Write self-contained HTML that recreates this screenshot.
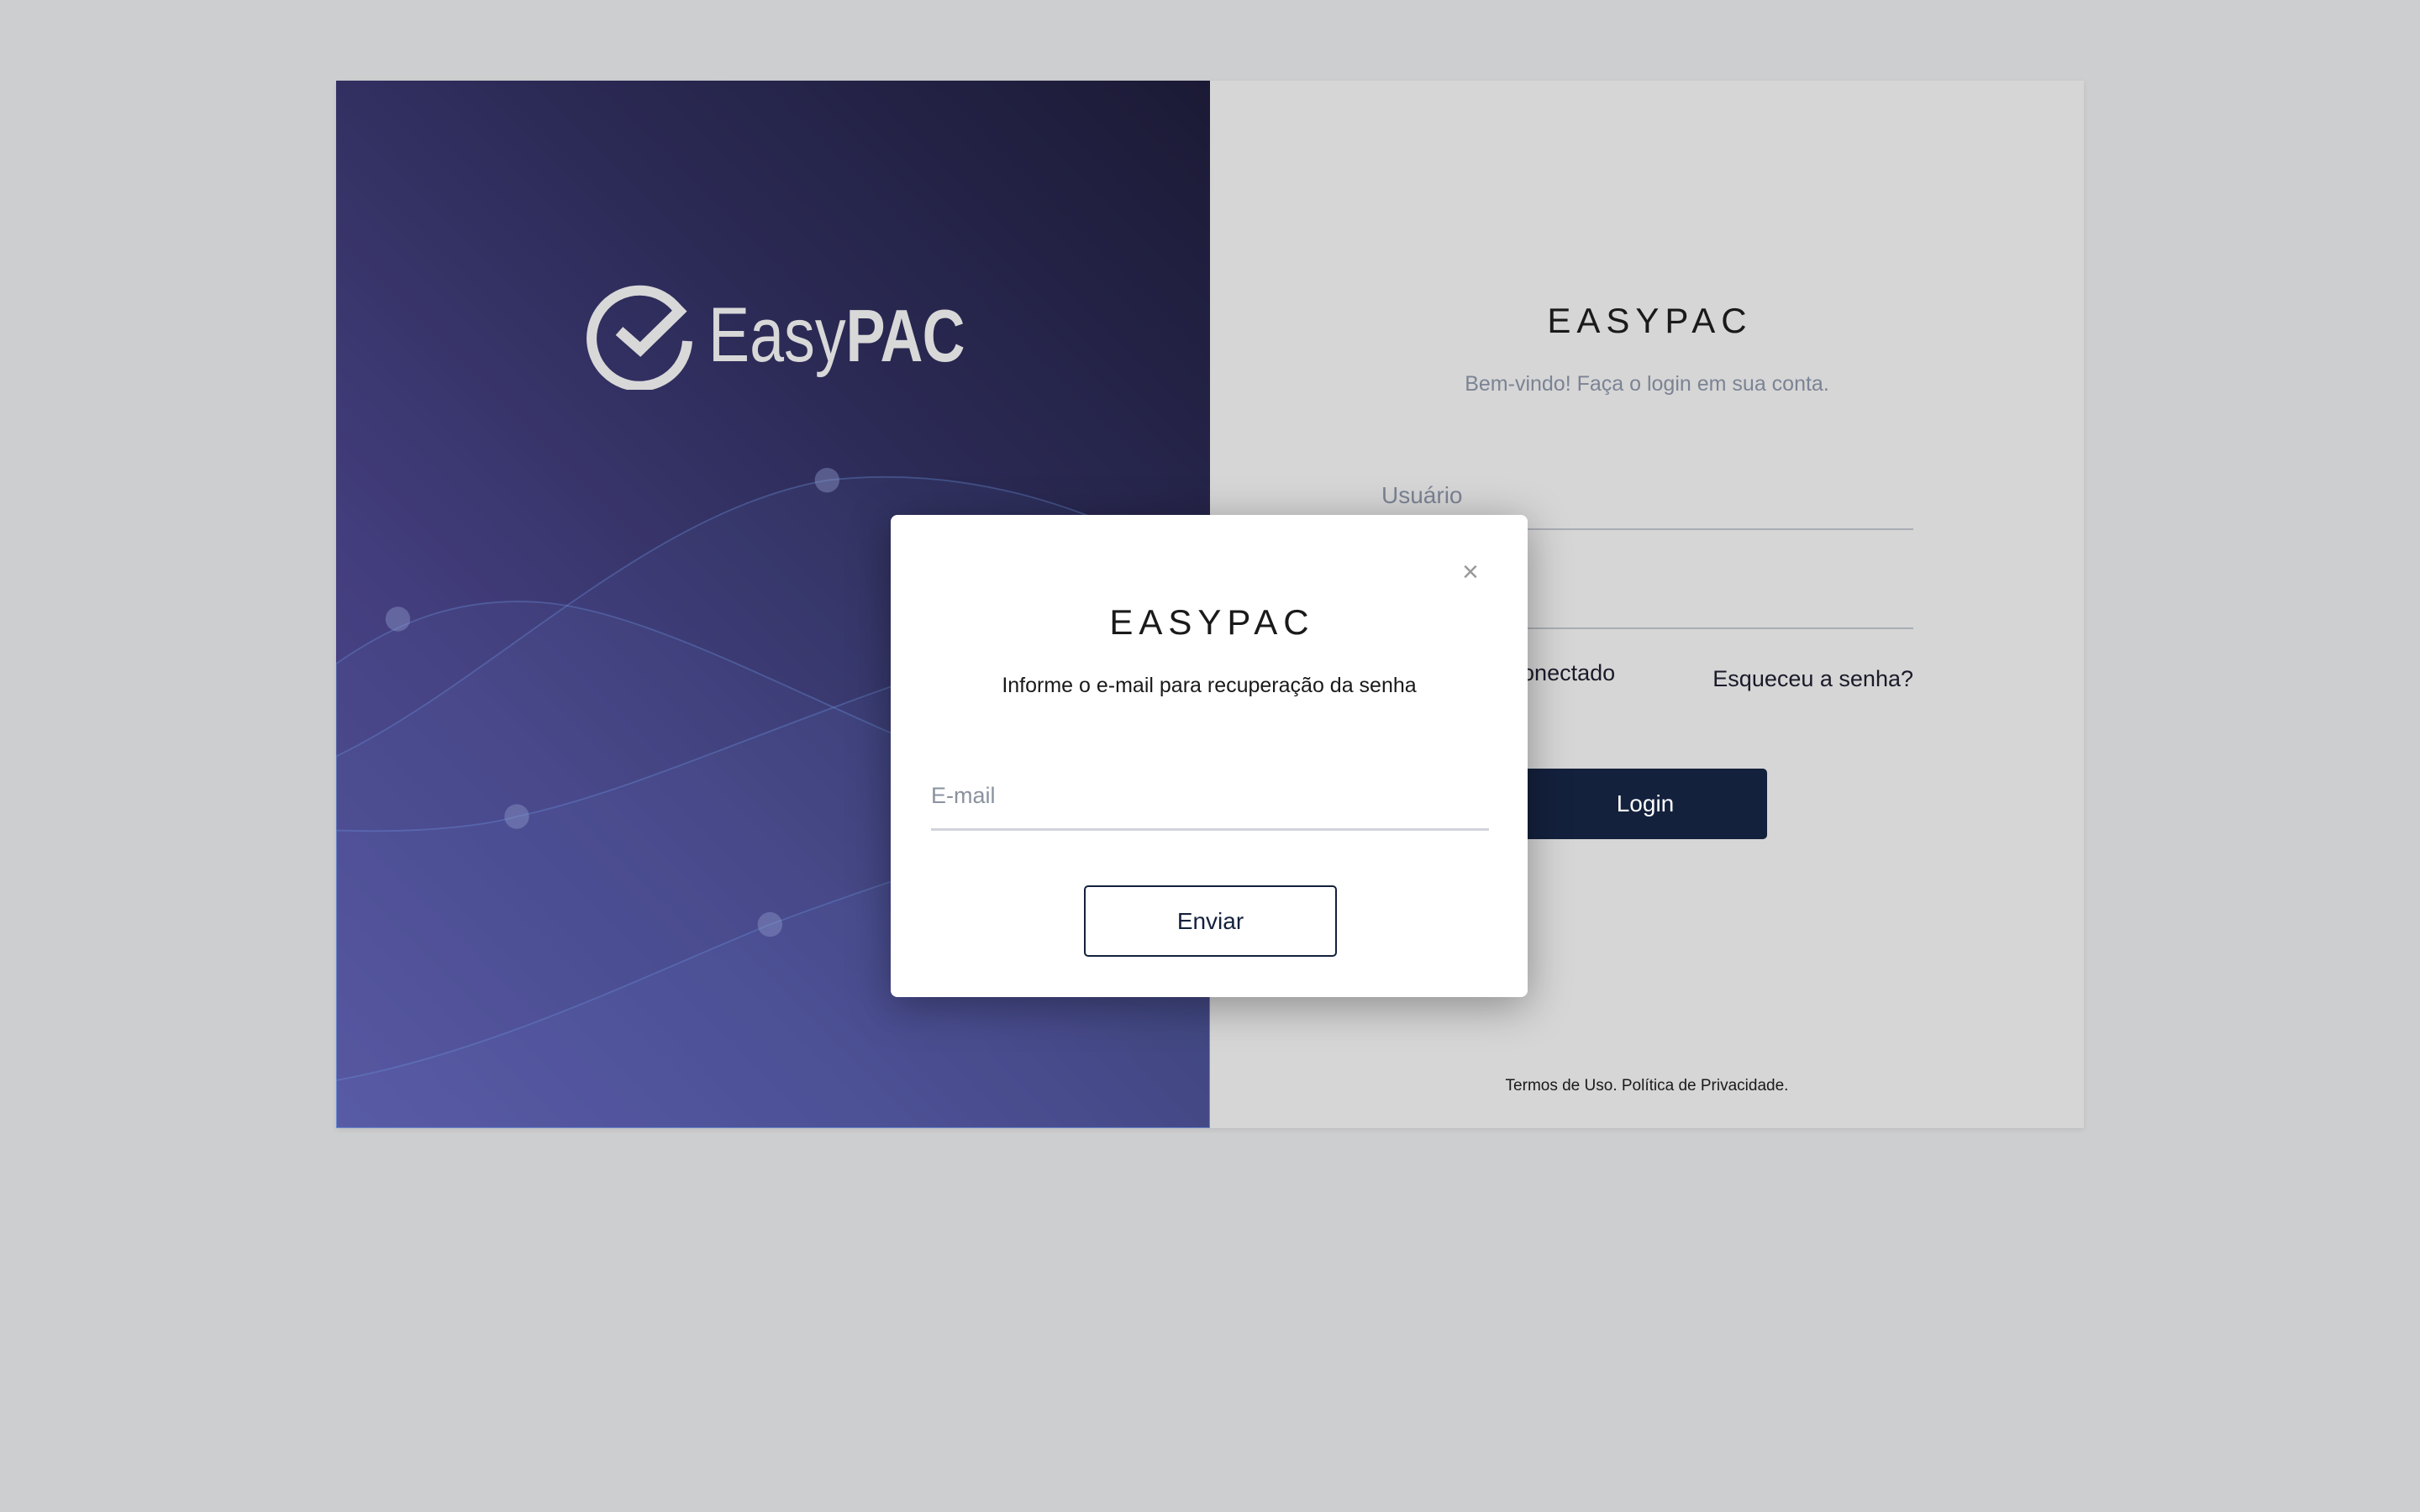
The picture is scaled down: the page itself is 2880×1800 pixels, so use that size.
<!DOCTYPE html>
<html><head><meta charset="utf-8"><style>
*{margin:0;padding:0;box-sizing:border-box}
body{width:2880px;height:1800px;background:#cdcecf;font-family:"Liberation Sans",sans-serif;position:relative;overflow:hidden}
.card{position:absolute;left:400px;top:96px;width:2080px;height:1247px;background:#d6d6d6;box-shadow:0 2px 6px rgba(0,0,0,0.08)}
.left{position:absolute;left:0;top:0;width:1040px;height:1247px;background:linear-gradient(225deg,#1b1a35 0%,#2b2a55 35%,#433e7e 70%,#514c93 100%);overflow:hidden}
.abs{position:absolute;white-space:nowrap}
.modal{position:absolute;left:1060px;top:613px;width:758px;height:574px;background:#fff;border-radius:8px;box-shadow:0 10px 50px rgba(0,0,0,0.35)}
</style></head><body>
<div class="card">
 <div class="left">
  <svg width="1040" height="1247" viewBox="0 0 566 679" preserveAspectRatio="none" style="position:absolute;left:0;top:0">
   <g stroke="rgba(110,150,220,0.35)" stroke-width="1" fill="rgba(120,150,230,0.06)">
    <path d="M0,378 C40,350 80,335 130,338 C200,342 300,400 400,440 C470,468 520,500 566,520 L566,679 L0,679Z"/>
    <path d="M0,438 C100,390 200,280 318,259 C400,250 480,270 566,320 L566,679 L0,679Z"/>
    <path d="M0,486 C60,488 100,482 117,477 C220,455 330,390 566,330 L566,679 L0,679Z"/>
    <path d="M0,648 C100,630 200,580 281,547 C380,510 480,480 566,460 L566,679 L0,679Z"/>
   </g>
   <g fill="rgba(140,150,200,0.45)">
    <circle cx="40" cy="349" r="8"/><circle cx="318" cy="259" r="8"/><circle cx="117" cy="477" r="8"/><circle cx="281" cy="547" r="8"/>
   </g>
  </svg>
  <svg width="140" height="140" viewBox="0 0 140 140" style="position:absolute;left:295px;top:228px">
   <path d="M112,45 A57,57 0 1 0 123,82" fill="none" stroke="#d8d8d8" stroke-width="12"/>
   <path d="M42,70 L67,92 L118,42" fill="none" stroke="#d8d8d8" stroke-width="13"/>
  </svg>
  <div class="abs" style="left:443px;top:257px;font-size:92px;color:#d8d8d8;line-height:1;transform:scaleX(0.8);transform-origin:0 0">Easy<b style="font-size:88px;letter-spacing:-1px">PAC</b></div>
 </div>
 <div class="abs" style="left:1040px;width:1040px;top:262px;text-align:center;font-size:42px;letter-spacing:7px;color:#1a1a1a;padding-left:7px">EASYPAC</div>
 <div class="abs" style="left:1040px;width:1040px;top:347px;text-align:center;font-size:25px;color:#7b8394">Bem-vindo! Faça o login em sua conta.</div>
 <div class="abs" style="left:1244px;top:478px;font-size:28px;color:#7b8394">Usuário</div>
 <div class="abs" style="left:1244px;top:533px;width:633px;height:2px;background:#a9adb3"></div>
 <div class="abs" style="left:1244px;top:651px;width:633px;height:2px;background:#a9adb3"></div>
 <div class="abs" style="left:1306px;top:690px;font-size:27px;color:#1a1a2a">Manter conectado</div>
 <div class="abs" style="width:637px;text-align:right;top:697px;font-size:27px;color:#1a1a2a;left:1240px">Esqueceu a senha?</div>
 <div class="abs" style="left:1413px;top:819px;width:290px;height:84px;background:#14213d;border-radius:5px;color:#fff;font-size:28px;text-align:center;line-height:84px">Login</div>
 <div class="abs" style="left:1040px;width:1040px;top:1186px;text-align:center;font-size:19px;color:#1a1a1a">Termos de Uso. Política de Privacidade.</div>
</div>
<div class="modal">
 <div class="abs" style="left:680px;top:51px;font-size:34px;color:#999;line-height:1">×</div>
 <div class="abs" style="left:0;width:758px;top:104px;text-align:center;font-size:42px;letter-spacing:7px;color:#1a1a1a;padding-left:7px">EASYPAC</div>
 <div class="abs" style="left:0;width:758px;top:189px;text-align:center;font-size:25px;color:#1a1a1a">Informe o e-mail para recuperação da senha</div>
 <div class="abs" style="left:48px;top:319px;font-size:27px;color:#8a929e">E-mail</div>
 <div class="abs" style="left:48px;top:373px;width:664px;height:3px;background:#d0d4da"></div>
 <div class="abs" style="left:230px;top:441px;width:301px;height:85px;border:2px solid #14213d;border-radius:5px;font-size:28px;color:#14213d;text-align:center;line-height:81px">Enviar</div>
</div>
</body></html>
